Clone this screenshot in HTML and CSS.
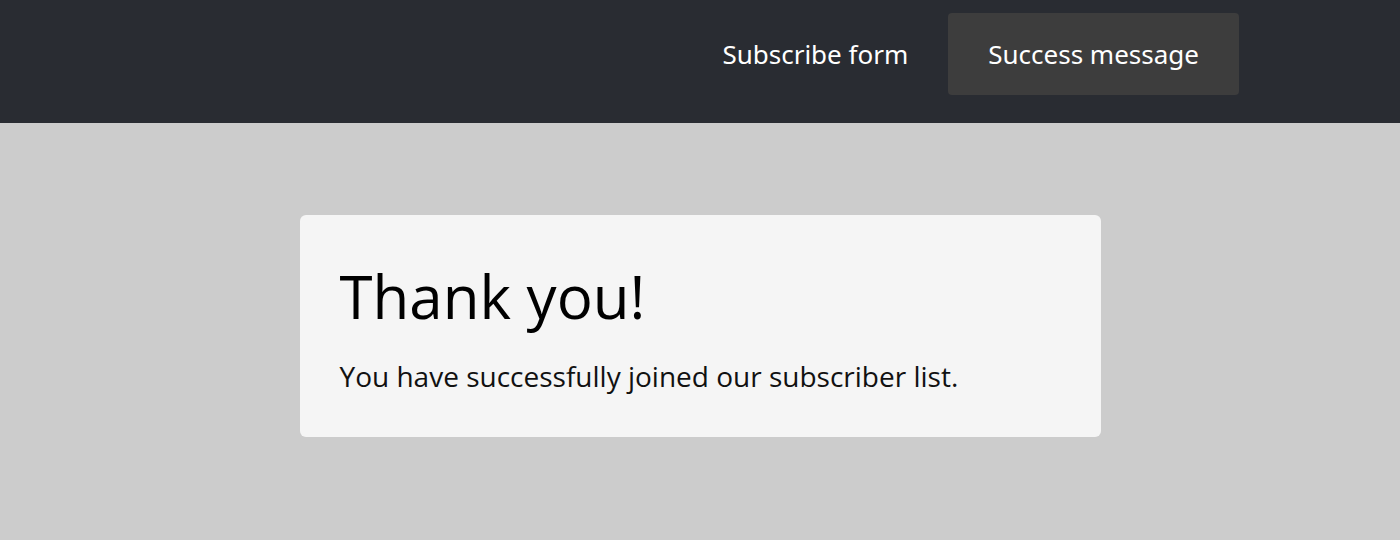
FILE: index.html
```html
<!DOCTYPE html>
<html lang="en">
<head>
<meta charset="utf-8">
<title>Subscribe</title>
<link rel="stylesheet" href="styles.css">
</head>
<body>
<header class="header">
  <nav class="nav">
    <a class="nav-link" href="#">Subscribe form</a>
    <a class="nav-link active" href="#">Success message</a>
  </nav>
</header>
<main class="main">
  <section class="card">
    <h1 class="title">Thank you!</h1>
    <p class="text">You have successfully joined our subscriber list.</p>
  </section>
</main>
</body>
</html>
```

FILE: styles.css
```css
* { box-sizing: border-box; }
html, body { margin: 0; padding: 0; }
body {
  background: #cccccc;
  font-family: "Open Sans", "Noto Sans", sans-serif;
  height: 540px;
}
.header {
  background: #292c32;
  height: 123px;
  display: flex;
  justify-content: flex-end;
  align-items: flex-start;
  padding: 13px 161px 0 0;
}
.nav {
  display: flex;
  align-items: center;
}
.nav-link {
  display: block;
  color: #ffffff;
  text-decoration: none;
  font-family: "Noto Sans", "Open Sans", sans-serif;
  font-size: 26px;
  line-height: 82px;
  padding: 0 40px;
  border-radius: 4px;
}
.nav-link.active {
  background: #3d3d3d;
}
.main {
  display: flex;
  justify-content: center;
  padding-top: 92px;
}
.card {
  width: 801px;
  height: 222px;
  background: #f5f5f5;
  border-radius: 6px;
  padding: 40px;
}
.title {
  margin: 0;
  font-weight: 400;
  font-size: 60px;
  line-height: 82px;
  color: #000;
}
.text {
  margin: 19px 0 0;
  font-size: 28px;
  line-height: 40px;
  color: #111;
}
```
